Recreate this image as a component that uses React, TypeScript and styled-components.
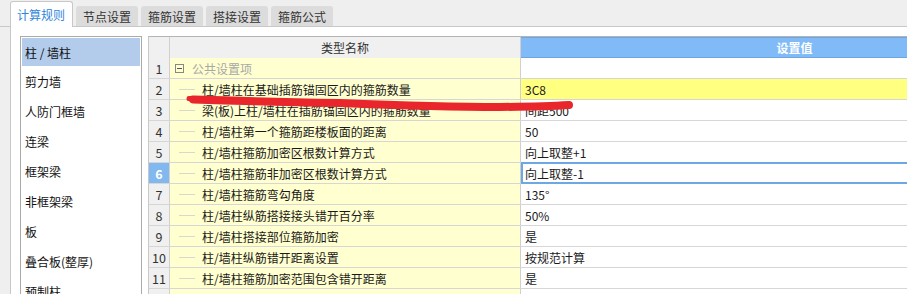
import styled, { createGlobalStyle, css } from "styled-components";

const GlobalStyle = createGlobalStyle`
  html, body {
    margin: 0;
    padding: 0;
    background: #efefef;
  }
  body {
    font-family: "Noto Sans CJK SC", "Noto Sans", sans-serif;
    font-size: 12px;
    color: #1a1a1a;
  }
`;

const Window = styled.div`
  width: 907px;
  height: 294px;
  overflow: hidden;
  position: relative;
  background: #efefef;
`;

const TabBar = styled.div`
  height: 26px;
  display: flex;
  align-items: flex-end;
  gap: 3px;
  padding-left: 10px;
  border-bottom: 1px solid #c8c8c8;
  box-sizing: content-box;
`;

const Tab = styled.div<{ active?: boolean }>`
  height: 20px;
  padding: 0 7px;
  display: flex;
  align-items: center;
  background: #dcdcdc;
  border-radius: 3px 3px 0 0;
  color: #333;
  font-size: 12px;
  margin-bottom: 0;

  ${(p) =>
    p.active &&
    css`
      height: 25px;
      margin-bottom: -1px;
      background: #fff;
      border: 1px solid #c8c8c8;
      border-bottom: none;
      color: #2f86dc;
      padding: 0 7px 0 6px;
    `}
`;

const Body = styled.div`
  display: flex;
  margin-left: 10px;
  height: 267px;
  background: #fff;
  border-left: 1px solid #c8c8c8;
  padding: 9px 0 0 9px;
  gap: 6px;
`;

const List = styled.div`
  width: 118px;
  flex-shrink: 0;
  border: 1px solid #aaa;
  border-bottom: none;
  padding: 1px;
  background: #fff;
`;

const ListItem = styled.div<{ selected?: boolean }>`
  height: 30px;
  display: flex;
  align-items: center;
  padding-left: 3px;
  font-size: 12px;
  color: #111;
  ${(p) =>
    p.selected &&
    css`
      height: 28px;
      background: #b3cceb;
    `}
`;

const Grid = styled.div`
  flex: 1;
  border-top: 1px solid #b4b4b4;
  border-left: 1px solid #c8c8c8;
  overflow: hidden;
`;

const Row = styled.div`
  display: grid;
  grid-template-columns: 21px 351px 548px;
  height: 21px;
  border-bottom: 1px solid #d6d6d6;
  box-sizing: border-box;
`;

const HeaderRow = styled(Row)`
  height: 21px;
  border-bottom: none;
`;

const IndexCell = styled.div<{ current?: boolean }>`
  background: #f0f0f0;
  border-right: 1px solid #d0d0d0;
  display: flex;
  align-items: center;
  justify-content: center;
  font-size: 12.5px;
  color: #333;
  ${(p) =>
    p.current &&
    css`
      background: #80b8ef;
      color: #fff;
      font-weight: 700;
    `}
`;

const HeadCell = styled.div<{ accent?: boolean }>`
  background: #f0f0f0;
  border-right: 1px solid #d0d0d0;
  display: flex;
  align-items: center;
  justify-content: center;
  font-size: 12px;
  color: #333;
  ${(p) =>
    p.accent &&
    css`
      background: #80bbf8;
      border-top: 1px solid #6ea6e4;
      border-bottom: 1px solid #6ea6e4;
      color: #fff;
      font-weight: 700;
    `}
`;

const NameCell = styled.div<{ group?: boolean }>`
  background: #ffffcf;
  border-right: 1px solid #d0d0d0;
  display: flex;
  align-items: center;
  padding-left: ${(p) => (p.group ? "5px" : "9px")};
  color: ${(p) => (p.group ? "#a8a8a8" : "#1a1a1a")};
  white-space: nowrap;
  overflow: hidden;
`;

const Branch = styled.span`
  width: 16px;
  height: 1px;
  background: #d8d8cc;
  margin-right: 7px;
  flex-shrink: 0;
`;

const Toggle = styled.span`
  width: 7px;
  height: 7px;
  border: 1px solid #888;
  margin-right: 8px;
  display: flex;
  align-items: center;
  justify-content: center;
  flex-shrink: 0;
  &::after {
    content: "";
    width: 5px;
    height: 1px;
    background: #555;
  }
`;

const ValueCell = styled.div<{ highlight?: boolean; focused?: boolean }>`
  position: relative;
  display: flex;
  align-items: center;
  padding-left: 4px;
  background: ${(p) => (p.highlight ? "#ffff80" : "#fff")};
  white-space: nowrap;
  ${(p) =>
    p.focused &&
    css`
      &::after {
        content: "";
        position: absolute;
        left: 0;
        right: 0;
        top: -1px;
        bottom: -1px;
        border: 2px solid #6ea8e4;
        pointer-events: none;
      }
    `}
`;

const Mark = styled.svg`
  position: absolute;
  left: 0;
  top: 0;
  pointer-events: none;
`;

const tabs = ["计算规则", "节点设置", "箍筋设置", "搭接设置", "箍筋公式"];

const categories = [
  "柱 / 墙柱",
  "剪力墙",
  "人防门框墙",
  "连梁",
  "框架梁",
  "非框架梁",
  "板",
  "叠合板(整厚)",
  "预制柱",
];

const rows = [
  { name: "柱/墙柱在基础插筋锚固区内的箍筋数量", value: "3C8", highlight: true },
  { name: "梁(板)上柱/墙柱在插筋锚固区内的箍筋数量", value: "间距500" },
  { name: "柱/墙柱第一个箍筋距楼板面的距离", value: "50" },
  { name: "柱/墙柱箍筋加密区根数计算方式", value: "向上取整+1" },
  { name: "柱/墙柱箍筋非加密区根数计算方式", value: "向上取整-1", focused: true },
  { name: "柱/墙柱箍筋弯勾角度", value: "135°" },
  { name: "柱/墙柱纵筋搭接接头错开百分率", value: "50%" },
  { name: "柱/墙柱搭接部位箍筋加密", value: "是" },
  { name: "柱/墙柱纵筋错开距离设置", value: "按规范计算" },
  { name: "柱/墙柱箍筋加密范围包含错开距离", value: "是" },
  { name: "柱/墙柱插筋伸至基础底部弯折长度按构造计算", value: "按平法图集计算" },
];

export default function App() {
  return (
    <Window>
      <GlobalStyle />
      <TabBar>
        {tabs.map((t, i) => (
          <Tab key={t} active={i === 0}>
            {t}
          </Tab>
        ))}
      </TabBar>
      <Body>
        <List>
          {categories.map((c, i) => (
            <ListItem key={c} selected={i === 0}>
              {c}
            </ListItem>
          ))}
        </List>
        <Grid>
          <HeaderRow>
            <HeadCell />
            <HeadCell>类型名称</HeadCell>
            <HeadCell accent>设置值</HeadCell>
          </HeaderRow>
          <Row>
            <IndexCell>1</IndexCell>
            <NameCell group>
              <Toggle />
              公共设置项
            </NameCell>
            <ValueCell />
          </Row>
          {rows.map((r, i) => (
            <Row key={r.name}>
              <IndexCell current={r.focused}>{i + 2}</IndexCell>
              <NameCell>
                <Branch />
                {r.name}
              </NameCell>
              <ValueCell highlight={r.highlight} focused={r.focused}>
                {r.value}
              </ValueCell>
            </Row>
          ))}
        </Grid>
      </Body>
      <Mark width="907" height="294" viewBox="0 0 907 294">
        <path
          d="M193 99.5 Q 260 101.5 340 103 Q 440 107 500 107 Q 545 106.5 569 105"
          fill="none"
          stroke="#e8262b"
          strokeWidth="8"
          strokeLinecap="round"
        />
        <path
          d="M189 98.5 L 230 100.5"
          fill="none"
          stroke="#e8262b"
          strokeWidth="5"
          strokeLinecap="round"
        />
      </Mark>
    </Window>
  );
}
